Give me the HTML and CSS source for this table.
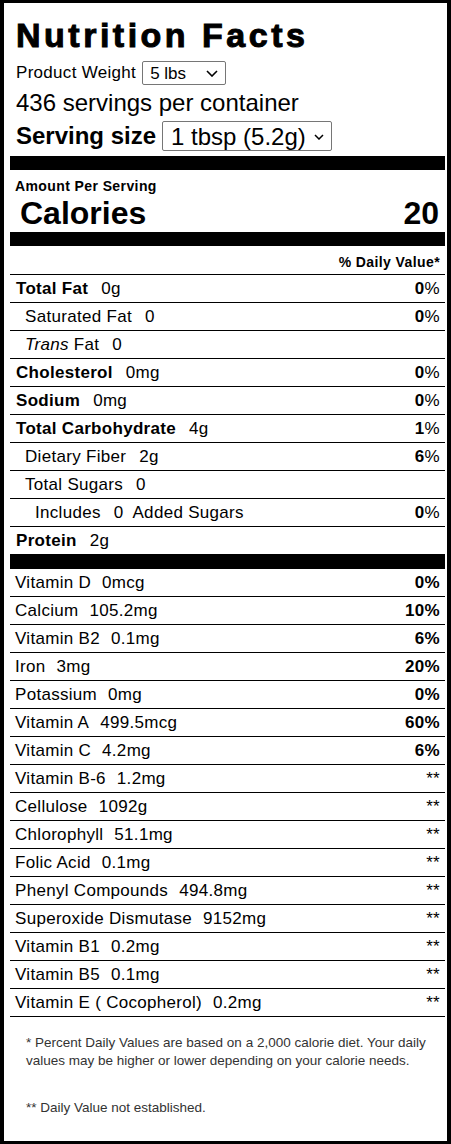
FILE: index.html
```html
<!DOCTYPE html>
<html>
<head>
  <title>Nutrition Facts</title>
  <link rel="stylesheet" href="styles.css">
</head>
<body>

  <div class="label">
    <h1 class="title">Nutrition Facts</h1>

    <div class="weight">
      <span>Product Weight</span>
      <span class="picker">
        <select class="weight-select">
          <option>5 lbs</option>
          <option>1 lb</option>
        </select>
        <svg class="chev" width="12" height="7" viewBox="0 0 12 7"><path d="M1 1 L6 6 L11 1" fill="none" stroke="#000" stroke-width="1.6"/></svg>
      </span>
    </div>

    <div class="servings">436 servings per container</div>

    <div class="serving-size">
      <span>Serving size</span>
      <span class="picker">
        <select class="size-select">
          <option>1 tbsp (5.2g)</option>
          <option>1 tsp (1.7g)</option>
        </select>
        <svg class="chev chev-sm" width="10" height="6" viewBox="0 0 10 6"><path d="M1 1 L5 5 L9 1" fill="none" stroke="#000" stroke-width="1.5"/></svg>
      </span>
    </div>

    <div class="bar"></div>

    <div class="amount">Amount Per Serving</div>
    <div class="calories">
      <span>Calories</span>
      <span>20</span>
    </div>

    <div class="bar"></div>

    <div class="dv-head">% Daily Value*</div>

    <div class="row"><span><b>Total Fat</b><span class="qty">0g</span></span><span><b>0</b>%</span></div>
    <div class="row indent"><span>Saturated Fat<span class="qty">0</span></span><span><b>0</b>%</span></div>
    <div class="row indent"><span><i>Trans</i> Fat<span class="qty">0</span></span><span></span></div>
    <div class="row"><span><b>Cholesterol</b><span class="qty">0mg</span></span><span><b>0</b>%</span></div>
    <div class="row"><span><b>Sodium</b><span class="qty">0mg</span></span><span><b>0</b>%</span></div>
    <div class="row"><span><b>Total Carbohydrate</b><span class="qty">4g</span></span><span><b>1</b>%</span></div>
    <div class="row indent"><span>Dietary Fiber<span class="qty">2g</span></span><span><b>6</b>%</span></div>
    <div class="row indent"><span>Total Sugars<span class="qty">0</span></span><span></span></div>
    <div class="row indent2"><span>Includes<span class="qty">0</span><span class="added">Added Sugars</span></span><span><b>0</b>%</span></div>
    <div class="row last"><span><b>Protein</b><span class="qty">2g</span></span><span></span></div>

    <div class="bar"></div>

    <div class="vit"><span>Vitamin D<span class="vqty">0mcg</span></span><b>0%</b></div>
    <div class="vit"><span>Calcium<span class="vqty">105.2mg</span></span><b>10%</b></div>
    <div class="vit"><span>Vitamin B2<span class="vqty">0.1mg</span></span><b>6%</b></div>
    <div class="vit"><span>Iron<span class="vqty">3mg</span></span><b>20%</b></div>
    <div class="vit"><span>Potassium<span class="vqty">0mg</span></span><b>0%</b></div>
    <div class="vit"><span>Vitamin A<span class="vqty">499.5mcg</span></span><b>60%</b></div>
    <div class="vit"><span>Vitamin C<span class="vqty">4.2mg</span></span><b>6%</b></div>
    <div class="vit"><span>Vitamin B-6<span class="vqty">1.2mg</span></span><span>**</span></div>
    <div class="vit"><span>Cellulose<span class="vqty">1092g</span></span><span>**</span></div>
    <div class="vit"><span>Chlorophyll<span class="vqty">51.1mg</span></span><span>**</span></div>
    <div class="vit"><span>Folic Acid<span class="vqty">0.1mg</span></span><span>**</span></div>
    <div class="vit"><span>Phenyl Compounds<span class="vqty">494.8mg</span></span><span>**</span></div>
    <div class="vit"><span>Superoxide Dismutase<span class="vqty">9152mg</span></span><span>**</span></div>
    <div class="vit"><span>Vitamin B1<span class="vqty">0.2mg</span></span><span>**</span></div>
    <div class="vit"><span>Vitamin B5<span class="vqty">0.1mg</span></span><span>**</span></div>
    <div class="vit"><span>Vitamin E ( Cocopherol)<span class="vqty">0.2mg</span></span><span>**</span></div>

    <div class="notes">
      <p>* Percent Daily Values are based on a 2,000 calorie diet. Your daily values may be higher or lower depending on your calorie needs.</p>
      <p>** Daily Value not established.</p>
    </div>
  </div>

</body>
</html>
```

FILE: styles.css
```css
body {
  margin: 0;
  font-family: "Liberation Sans", Arial, sans-serif;
  color: #000;
}

.label {
  box-sizing: border-box;
  width: 451px;
  height: 1144px;
  border: 4px solid #000;
  border-top-width: 3px;
  border-bottom-width: 3px;
  padding: 12px 2px 0 6px;
}

.title {
  margin: 0 0 0 6px;
  font-size: 34px;
  line-height: 40px;
  font-weight: bold;
  letter-spacing: 3.5px;
  -webkit-text-stroke: 1px #000;
}

.weight {
  display: flex;
  align-items: center;
  gap: 6px;
  margin: 6px 0 0 6px;
  font-size: 17px;
  letter-spacing: 0.3px;
  height: 24px;
}

.picker {
  position: relative;
  display: inline-flex;
}

select {
  appearance: none;
  -webkit-appearance: none;
  background: #fff;
  color: #000;
  border: 1px solid #767676;
  border-radius: 2px;
  font-family: "Liberation Sans", Arial, sans-serif;
  margin: 0;
}

.weight-select {
  width: 84px;
  height: 24px;
  padding: 0 0 0 7px;
  font-size: 17px;
}

.chev {
  position: absolute;
  right: 8px;
  top: 9px;
  pointer-events: none;
}

.chev-sm {
  right: 8px;
  top: 13px;
}

.servings {
  margin: 4px 0 0 6px;
  font-size: 24px;
  line-height: 28px;
}

.serving-size {
  display: flex;
  align-items: center;
  gap: 6px;
  margin: 4px 0 0 6px;
  font-size: 24px;
  font-weight: bold;
  height: 30px;
}

.size-select {
  width: 170px;
  height: 30px;
  padding: 0 0 0 8px;
  font-size: 24px;
}

.bar {
  height: 14px;
  background: #000;
  margin-top: 5px;
}

.amount {
  margin: 8px 0 0 5px;
  font-size: 14px;
  letter-spacing: 0.4px;
  font-weight: bold;
  line-height: 16px;
}

.calories {
  display: flex;
  justify-content: space-between;
  padding: 0 6px 0 10px;
  font-size: 32px;
  font-weight: bold;
  line-height: 38px;
}

.calories + .bar {
  margin-top: 0;
}

.dv-head {
  text-align: right;
  font-size: 14px;
  letter-spacing: 0.4px;
  font-weight: bold;
  padding: 5px 5px 0 0;
  line-height: 23px;
  border-bottom: 1px solid #000;
}

.row,
.vit {
  display: flex;
  justify-content: space-between;
  align-items: center;
  height: 27px;
  padding: 0 5px 0 6px;
  border-bottom: 1px solid #000;
  font-size: 17px;
  letter-spacing: 0.3px;
}

.row.last {
  border-bottom: none;
}

.row + .bar {
  margin-top: 0;
  height: 15px;
}

.indent {
  padding-left: 15px;
}

.indent2 {
  padding-left: 25px;
}

.qty {
  margin-left: 13px;
}

.added {
  margin-left: 9px;
}

.vit {
  padding-left: 5px;
}

.vqty {
  margin-left: 11px;
}

.notes {
  padding: 17px 12px 0 16px;
  font-size: 13.5px;
  line-height: 18px;
  color: #333;
}

.notes p {
  margin: 0 0 29px;
}
```
